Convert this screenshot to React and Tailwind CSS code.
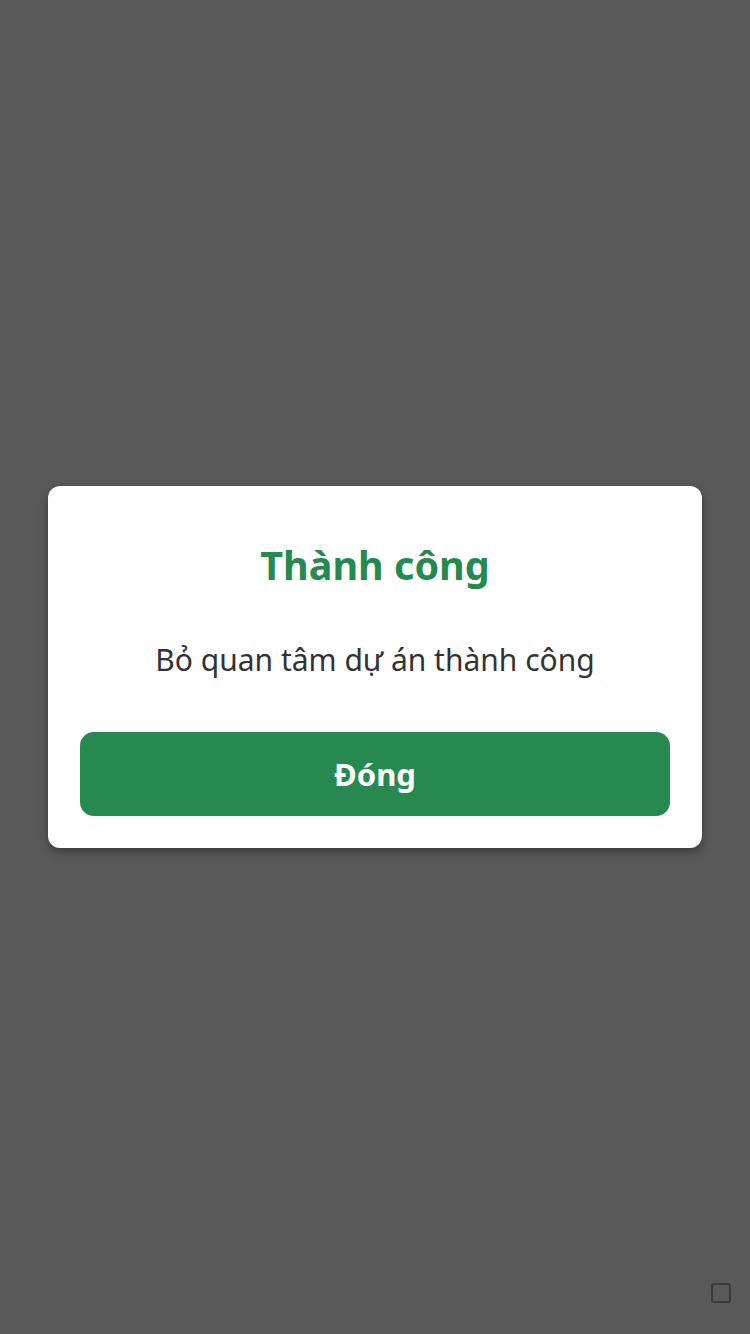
import React from 'react';

export default function App() {
  return (
    <div
      className="relative w-[750px] h-[1334px] bg-[#595959] flex items-center justify-center"
      style={{ fontFamily: '"Noto Sans", "Open Sans", sans-serif' }}
    >
      {/* hộp thông báo */}
      <div className="w-[654px] bg-white rounded-[12px] shadow-[0_4px_10px_rgba(0,0,0,0.35)] px-8 pt-[55px] pb-8 flex flex-col items-center">
        <h1 className="text-[39.5px] leading-[48px] font-bold text-[#268a50]">Thành công</h1>
        <p className="mt-[51px] text-[30px] leading-[40px] text-[#333333]">Bỏ quan tâm dự án thành công</p>
        <button className="mt-[52px] w-full h-[84px] rounded-[14px] bg-[#268a50] text-white text-[31px] font-bold">
          Đóng
        </button>
      </div>

      <div className="absolute left-[711px] top-[1283px] w-[20px] h-[20px] rounded-[3px] border-2 border-[#3a3a3a]"></div>
    </div>
  );
}
